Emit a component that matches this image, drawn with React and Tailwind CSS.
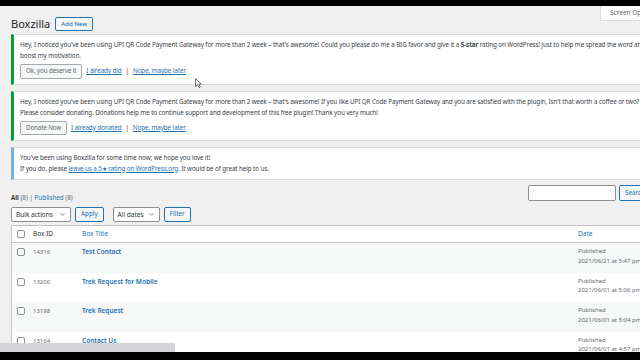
import React from "react";
import { ChevronDown } from "lucide-react";

const rows = [
  { id: "14316", title: "Test Contact", date: "2021/06/21 at 5:47 pm" },
  { id: "13200", title: "Trek Request for Mobile", date: "2021/06/01 at 5:06 pm" },
  { id: "13198", title: "Trek Request", date: "2021/06/01 at 5:04 pm" },
  { id: "13164", title: "Contact Us", date: "2021/06/01 at 4:57 pm" },
];

function Notice({ color, children }) {
  return (
    <div
      className={`bg-white border border-[#dcdcde] border-l-[3px] ${color} pl-[6px] pt-[5px] pb-[5px] text-[6.3px] tracking-[-0.1px] leading-[10.5px] text-[#3c434a]`}
    >
      {children}
    </div>
  );
}

function Select({ label, width }) {
  return (
    <div
      className={`${width} h-[15px] flex items-center justify-between bg-white border border-[#8c8f94] rounded-[2px] px-[4px] text-[6.5px] text-[#2c3338]`}
    >
      <span>{label}</span>
      <ChevronDown size={7} strokeWidth={2.5} className="text-[#50575e]" />
    </div>
  );
}

function Checkbox() {
  return <div className="w-[8px] h-[8px] border border-[#8c8f94] rounded-[2px] bg-white" />;
}

export default function App() {
  return (
    <div className="w-[640px] h-[360px] overflow-hidden bg-black font-['Noto_Sans',sans-serif]">
      <div className="h-[6px] bg-black" />
      <div className="h-[346px] bg-[#f0f0f1] overflow-hidden relative">
        <div className="w-[720px] pl-[11px]">
          {/* header */}
          <div className="flex items-start h-[28px]">
            <div className="w-[589px] flex items-center gap-[5px] pt-[10px]">
              <h1 className="text-[11px] leading-[16px] text-[#1d2327]">Boxzilla</h1>
              <button className="h-[14px] px-[5px] border border-[#2271b1] rounded-[2px] bg-[#f6f7f7] text-[#2271b1] text-[6px] font-medium leading-none">
                Add New
              </button>
            </div>
            <div className="w-[100px] h-[15px] bg-white border border-t-0 border-[#dcdcde] pl-[9px] flex items-center text-[6.5px] text-[#646970]">
              Screen Options
            </div>
          </div>

          <div className="flex flex-col gap-[6px] w-[690px]">
            <Notice color="border-l-[#00a32a]">
              <div className="whitespace-nowrap">
                Hey, I noticed you've been using UPI QR Code Payment Gateway for more than 2 week – that's awesome! Could you please do me a BIG favor and give it a <b>5-star</b> rating on WordPress! Just to help me spread the word and
              </div>
              <div className="whitespace-nowrap">boost my motivation.</div>
              <div className="flex items-center gap-[4px] mt-[3px]">
                <button className="h-[15px] px-[5px] border border-[#a7aaad] rounded-[2px] bg-[#f6f7f7] text-[#646970] text-[6.2px] leading-none">
                  Ok, you deserve it
                </button>
                <a className="text-[#2271b1] underline">I already did</a>
                <span>|</span>
                <a className="text-[#2271b1] underline">Nope, maybe later</a>
              </div>
            </Notice>

            <Notice color="border-l-[#00a32a]">
              <div className="whitespace-nowrap">
                Hey, I noticed you've been using UPI QR Code Payment Gateway for more than 2 week – that's awesome! If you like UPI QR Code Payment Gateway and you are satisfied with the plugin, Isn't that worth a coffee or two?
              </div>
              <div className="whitespace-nowrap">
                Please consider donating. Donations help me to continue support and development of this free plugin! Thank you very much!
              </div>
              <div className="flex items-center gap-[4px] mt-[3px]">
                <button className="h-[14px] px-[5px] border border-[#a7aaad] rounded-[2px] bg-[#f6f7f7] text-[#646970] text-[6.2px] leading-none">
                  Donate Now
                </button>
                <a className="text-[#2271b1] underline">I already donated</a>
                <span>|</span>
                <a className="text-[#2271b1] underline">Nope, maybe later</a>
              </div>
            </Notice>

            <Notice color="border-l-[#72aee6]">
              <div className="whitespace-nowrap">You've been using Boxzilla for some time now; we hope you love it!</div>
              <div className="whitespace-nowrap">
                If you do, please <a className="text-[#2271b1] underline">leave us a 5★ rating on WordPress.org</a>. It would be of great help to us.
              </div>
            </Notice>
          </div>

          {/* views + search */}
          <div className="flex items-start mt-[5px]">
            <div className="w-[517px] pt-[8px] text-[6.3px] leading-[10px] text-[#646970]">
              <span className="font-semibold text-[#1d2327]">All</span> (8) |{" "}
              <span className="text-[#2271b1]">Published</span> (8)
            </div>
            <div className="w-[88px] h-[16px] bg-white border border-[#8c8f94] rounded-[2px]" />
            <button className="ml-[3px] h-[16px] px-[5px] border border-[#2271b1] rounded-[2px] bg-[#f6f7f7] text-[#2271b1] text-[6.3px] leading-none">
              Search Boxes
            </button>
          </div>

          {/* tablenav */}
          <div className="flex items-center mt-[4px] h-[15px]">
            <Select label="Bulk actions" width="w-[60px]" />
            <button className="ml-[4px] h-[15px] px-[5px] border border-[#2271b1] rounded-[2px] bg-[#f6f7f7] text-[#2271b1] text-[6.3px] leading-none">
              Apply
            </button>
            <div className="ml-[9px]">
              <Select label="All dates" width="w-[47px]" />
            </div>
            <button className="ml-[4px] h-[15px] px-[5px] border border-[#2271b1] rounded-[2px] bg-[#f6f7f7] text-[#2271b1] text-[6.3px] leading-none">
              Filter
            </button>
          </div>

          {/* table */}
          <div className="mt-[3px] w-[680px] bg-white border border-[#c3c4c7] text-[6.5px]">
            <div className="flex items-center h-[17px] border-b border-[#c3c4c7]">
              <div className="w-[21px] pl-[5px]">
                <Checkbox />
              </div>
              <div className="w-[49px] text-[#2c3338]">Box ID</div>
              <div className="w-[496px] text-[#2271b1]">Box Title</div>
              <div className="text-[#2271b1]">Date</div>
            </div>
            {rows.map((row, i) => (
              <div
                key={row.id}
                className={`flex items-start h-[29.5px] pt-[4px] ${i % 2 === 0 ? "bg-[#f6f7f7]" : "bg-white"}`}
              >
                <div className="w-[21px] pl-[5px] pt-[1px]">
                  <Checkbox />
                </div>
                <div className="w-[49px] text-[#646970] text-[6px] leading-[10px]">{row.id}</div>
                <div className="w-[496px] text-[#2271b1] font-semibold leading-[10px]">{row.title}</div>
                <div className="text-[#646970] text-[6px] leading-[9.5px] whitespace-nowrap">
                  <div>Published</div>
                  <div>{row.date}</div>
                </div>
              </div>
            ))}
          </div>
        </div>

        {/* cursor */}
        <svg className="absolute left-[195px] top-[72px]" width="7" height="10" viewBox="0 0 7 10">
          <path d="M0.5 0.5 L0.5 8.5 L2.5 6.6 L4 9.5 L5.2 8.9 L3.8 6.1 L6.3 6.1 Z" fill="#fff" stroke="#333" strokeWidth="0.7" />
        </svg>

        {/* horizontal scrollbar thumb */}
        <div className="absolute left-0 bottom-0 w-[175px] h-[9px] bg-[#d5d5d8]" />
      </div>
    </div>
  );
}
